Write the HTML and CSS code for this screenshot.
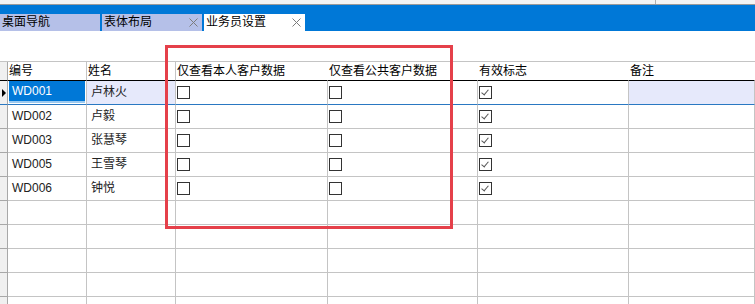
FILE: index.html
```html
<!DOCTYPE html>
<html lang="zh-CN">
<head>
    <meta charset="UTF-8">
    <meta name="viewport" content="width=device-width, initial-scale=1.0">
    <title>业务员设置</title>
    <link rel="stylesheet" href="styles.css">
</head>
<body>

    <div class="topstrip"><span class="topsep"></span></div>

    <div class="tabbar">
        <div class="tab">桌面导航</div>
        <div class="tab">表体布局
            <svg class="close" width="9" height="9" viewBox="0 0 9 9"><path d="M0.5 0.5L8.5 8.5M8.5 0.5L0.5 8.5" stroke="#7c7c7c" stroke-width="1" fill="none"/></svg>
        </div>
        <div class="tab active">业务员设置
            <svg class="close" width="9" height="9" viewBox="0 0 9 9"><path d="M0.5 0.5L8.5 8.5M8.5 0.5L0.5 8.5" stroke="#7c7c7c" stroke-width="1" fill="none"/></svg>
        </div>
    </div>

    <div class="workspace">
        <div class="grid">
            <div class="row head">
                <div class="ind"></div>
                <div class="cell sep">编号</div>
                <div class="cell sep">姓名</div>
                <div class="cell">仅查看本人客户数据</div>
                <div class="cell">仅查看公共客户数据</div>
                <div class="cell">有效标志</div>
                <div class="cell">备注</div>
            </div>

            <div class="row current">
                <div class="ind"><span class="arrow"></span></div>
                <div class="cell"><span class="selected">WD001</span></div>
                <div class="cell text">卢林火</div>
                <div class="cell"><span class="check"></span></div>
                <div class="cell"><span class="check"></span></div>
                <div class="cell"><span class="check on"></span></div>
                <div class="cell text"></div>
            </div>
            <div class="row">
                <div class="ind"></div>
                <div class="cell">WD002</div>
                <div class="cell">卢毅</div>
                <div class="cell"><span class="check"></span></div>
                <div class="cell"><span class="check"></span></div>
                <div class="cell"><span class="check on"></span></div>
                <div class="cell"></div>
            </div>
            <div class="row">
                <div class="ind"></div>
                <div class="cell">WD003</div>
                <div class="cell">张慧琴</div>
                <div class="cell"><span class="check"></span></div>
                <div class="cell"><span class="check"></span></div>
                <div class="cell"><span class="check on"></span></div>
                <div class="cell"></div>
            </div>
            <div class="row">
                <div class="ind"></div>
                <div class="cell">WD005</div>
                <div class="cell">王雪琴</div>
                <div class="cell"><span class="check"></span></div>
                <div class="cell"><span class="check"></span></div>
                <div class="cell"><span class="check on"></span></div>
                <div class="cell"></div>
            </div>
            <div class="row">
                <div class="ind"></div>
                <div class="cell">WD006</div>
                <div class="cell">钟悦</div>
                <div class="cell"><span class="check"></span></div>
                <div class="cell"><span class="check"></span></div>
                <div class="cell"><span class="check on"></span></div>
                <div class="cell"></div>
            </div>

            <div class="row"><div class="ind"></div><div class="cell"></div><div class="cell"></div><div class="cell"></div><div class="cell"></div><div class="cell"></div><div class="cell"></div></div>
            <div class="row"><div class="ind"></div><div class="cell"></div><div class="cell"></div><div class="cell"></div><div class="cell"></div><div class="cell"></div><div class="cell"></div></div>
            <div class="row"><div class="ind"></div><div class="cell"></div><div class="cell"></div><div class="cell"></div><div class="cell"></div><div class="cell"></div><div class="cell"></div></div>
            <div class="row"><div class="ind"></div><div class="cell"></div><div class="cell"></div><div class="cell"></div><div class="cell"></div><div class="cell"></div><div class="cell"></div></div>
            <div class="row"><div class="ind"></div><div class="cell"></div><div class="cell"></div><div class="cell"></div><div class="cell"></div><div class="cell"></div><div class="cell"></div></div>
        </div>

        <!-- annotation box drawn over the grid -->
        <div class="mark"></div>
    </div>

</body>
</html>
```

FILE: styles.css
```css
body {
    margin: 0;
    padding: 0;
    background: #ffffff;
    font-family: "Liberation Sans", "Noto Sans CJK SC", sans-serif;
    font-size: 12px;
    color: #222;
    height: 304px;
    overflow: hidden;
}
.topstrip {
    height: 4px;
    background: #f4f4f4;
    border-bottom: 1px solid #9a9a9a;
    position: relative;
}
.topsep {
    position: absolute;
    left: 655px;
    top: 0;
    width: 1px;
    height: 4px;
    background: #b0b0b0;
}
.tabbar {
    height: 26px;
    background: #0078d7;
    display: flex;
    align-items: flex-end;
    gap: 3px;
}
.tab {
    width: 100px;
    height: 17px;
    background: #b5c0e8;
    color: #000;
    line-height: 17px;
    padding-left: 2px;
    box-sizing: border-box;
    position: relative;
    white-space: nowrap;
}
.tab:nth-child(2) {
    margin-left: -1px;
}
.tab.active {
    background: #ffffff;
    margin-left: -1px;
    width: 101px;
}
.close {
    position: absolute;
    right: 4px;
    top: 4px;
}
.workspace {
    position: relative;
    padding-top: 30px;
    height: 243px;
    overflow: hidden;
}
.grid {
    width: 755px;
}
.row {
    display: grid;
    grid-template-columns: 8px 79px 89px 152px 150px 151px 1fr;
    height: 24px;
}
.row.head {
    height: 19px;
    border-top: 1px solid #c4c4c4;
}
.ind {
    background: #f0f0f0;
    border-right: 1px solid #a8a8a8;
    border-bottom: 1px solid #a8a8a8;
    position: relative;
}
.cell {
    border-right: 1px solid #c4c4c4;
    border-bottom: 1px solid #c4c4c4;
    line-height: 23px;
    padding-left: 4px;
    white-space: nowrap;
    overflow: hidden;
    position: relative;
}
.head .cell {
    border-right-color: transparent;
    border-bottom: 1px solid #000;
    line-height: 18px;
    padding-left: 1px;
    color: #000;
}
.head .cell.sep {
    border-right-color: #c4c4c4;
}
.head .ind {
    border-bottom: 1px solid #000;
}
.current .cell,
.current .ind {
    border-bottom-color: #2a78c2;
}
.current .text {
    background: #e6e9fb;
}
.selected {
    position: absolute;
    left: 1px;
    top: 0;
    right: 1px;
    height: 20px;
    background: #0078d7;
    border-bottom: 2px solid #9ccaf0;
    color: #fff;
    padding-left: 3px;
    line-height: 21px;
}
.arrow {
    position: absolute;
    left: 2px;
    top: 8px;
    border-top: 4px solid transparent;
    border-bottom: 4px solid transparent;
    border-left: 4px solid #000;
}
.check {
    position: absolute;
    left: 1px;
    top: 5px;
    width: 11px;
    height: 11px;
    border: 1px solid #333;
    background: #fff;
}
.check.on::after {
    content: "";
    position: absolute;
    left: 3px;
    top: 1px;
    width: 3px;
    height: 6px;
    border-right: 1.5px solid #555;
    border-bottom: 1.5px solid #555;
    transform: rotate(40deg);
}
.mark {
    position: absolute;
    left: 165px;
    top: 14px;
    width: 288px;
    height: 184px;
    border: 3px solid #e5404a;
    box-sizing: border-box;
}
```
